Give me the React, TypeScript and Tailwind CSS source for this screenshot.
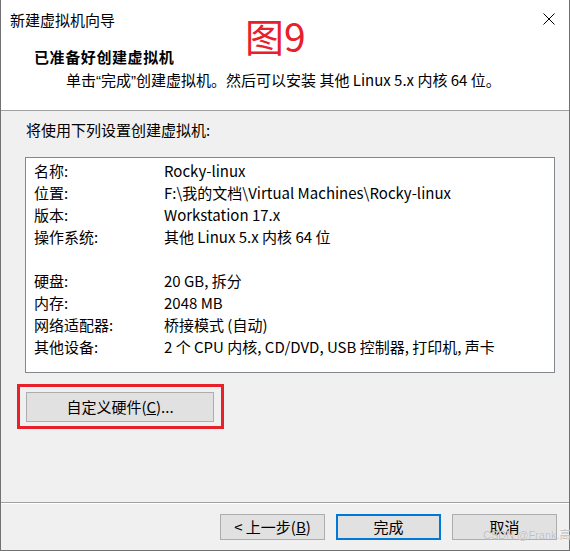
import React from "react";

const rows: [string, string][] = [
  ["名称:", "Rocky-linux"],
  ["位置:", "F:\\我的文档\\Virtual Machines\\Rocky-linux"],
  ["版本:", "Workstation 17.x"],
  ["操作系统:", "其他 Linux 5.x 内核 64 位"],
  ["", ""],
  ["硬盘:", "20 GB, 拆分"],
  ["内存:", "2048 MB"],
  ["网络适配器:", "桥接模式 (自动)"],
  ["其他设备:", "2 个 CPU 内核, CD/DVD, USB 控制器, 打印机, 声卡"],
];

const q = { fontFamily: '"Liberation Sans", sans-serif' };

export default function App() {
  return (
    <div
      className="relative w-[570px] h-[551px] bg-[#f0f0f0] border-l border-r border-b border-[#717171] flex flex-col text-[15px] text-black"
      style={{ fontFamily: '"Noto Sans CJK SC", sans-serif' }}
    >
      {/* Header */}
      <div className="h-[111px] shrink-0 bg-white border-b border-[#a0a0a0] flex flex-col">
        <div className="flex items-start justify-between pt-[9px] pl-[9px] pr-[14px]">
          <span className="leading-[22px]">新建虚拟机向导</span>
          <svg width="12" height="12" viewBox="0 0 12 12" className="mt-[4px]">
            <path d="M0.5 0.5 L11.5 11.5 M11.5 0.5 L0.5 11.5" stroke="#000" strokeWidth="1" fill="none" />
          </svg>
        </div>
        <div className="mt-[15px] pl-[33px] leading-[22px] font-bold tracking-[0.6px]">已准备好创建虚拟机</div>
        <div className="mt-[1px] pl-[65px] leading-[22px] whitespace-pre">
          单击<span style={q}>“</span>完成<span style={q}>”</span>创建虚拟机。然后可以安装 其他 Linux 5.x 内核 64 位。
        </div>
      </div>

      {/* Body */}
      <div className="flex-1 flex flex-col items-start">
        <div className="mt-[8px] pl-[25px] leading-[22px]">将使用下列设置创建虚拟机:</div>
        <div className="mt-[16px] ml-[24px] w-[530px] h-[216px] bg-white border border-[#828790] pt-[2px] pl-[8px]">
          {rows.map(([k, v], i) => (
            <div key={i} className="grid grid-cols-[130px_1fr] h-[22px] leading-[22px] whitespace-pre">
              <span>{k}</span>
              <span>{v}</span>
            </div>
          ))}
        </div>
        <button className="mt-[19px] ml-[25px] w-[188px] h-[30px] bg-[#e1e1e1] border border-[#adadad] leading-[22px] text-center">
          自定义硬件(<span className="underline">C</span>)...
        </button>
      </div>

      {/* Footer */}
      <div className="h-[48px] shrink-0 border-t border-[#a0a0a0]">
        <div className="h-full border-t border-white flex justify-end items-start pt-[10px] pr-[12px] gap-[11px]">
          <button className="w-[105px] h-[26px] bg-[#e1e1e1] border border-[#adadad] leading-[22px] text-center">
            &lt; 上一步(<span className="underline">B</span>)
          </button>
          <button className="w-[105px] h-[26px] bg-[#e1e1e1] border-2 border-[#0078d7] leading-[20px] text-center">
            完成
          </button>
          <button className="w-[105px] h-[26px] bg-[#e1e1e1] border border-[#adadad] leading-[22px] text-center">
            取消
          </button>
        </div>
      </div>

      {/* Annotations */}
      <div className="absolute left-[16px] top-[384px] w-[207px] h-[45px] border-[3px] border-[#e8202a]" />
      <div className="absolute left-[244px] top-[10px] text-[39px] leading-[50px] text-[#e8202a]">图9</div>
      <div
        className="absolute left-[482px] top-[529px] text-[11px] leading-[13px] text-[#bdbdbd] whitespace-nowrap"
        style={{ textShadow: "0 0 1px #ffffff", fontFamily: '"Liberation Sans", "Noto Sans CJK SC", sans-serif' }}
      >
        CSDN @Frank.高
      </div>
    </div>
  );
}
